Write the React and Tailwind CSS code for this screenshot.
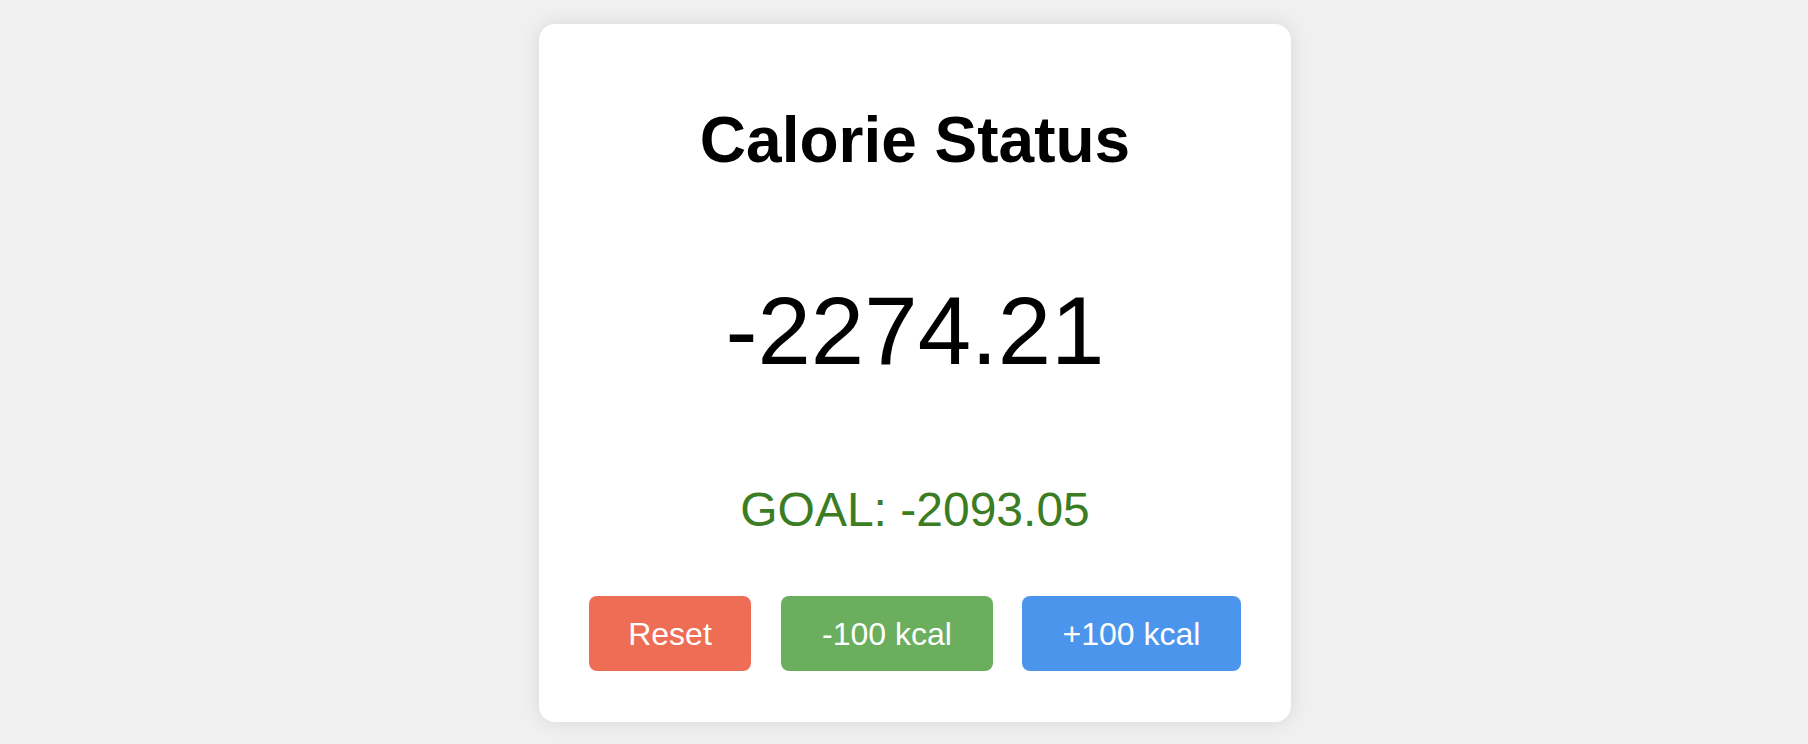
import React from "react";

export default function App() {
  return (
    <div
      className="min-h-[744px] w-full bg-[#f0f0f0] flex justify-center pl-[22px] pt-[24px]"
      style={{ fontFamily: '"Liberation Sans", Arial, sans-serif' }}
    >
      <div className="w-[752px] h-[698px] bg-white rounded-[16px] shadow-[0_0_20px_rgba(0,0,0,0.1)] flex flex-col items-center pt-[80px]">
        <h1 className="text-[64px] font-bold text-black leading-[73px] m-0">Calorie Status</h1>
        <div className="mt-[99px] text-[96px] text-black leading-[110px]">-2274.21</div>
        <div className="mt-[96px] text-[48px] text-[#3b7d23] leading-[55px]">GOAL: -2093.05</div>
        <div className="mt-[59px] flex gap-[30px]">
          <button className="w-[162px] h-[75px] rounded-[8px] bg-[#ee6e55] text-white text-[32px]">Reset</button>
          <button className="w-[212px] h-[75px] rounded-[8px] bg-[#6aae5e] text-white text-[32px]">-100 kcal</button>
          <button className="w-[219px] h-[75px] rounded-[8px] bg-[#4b96ec] text-white text-[32px] -ml-[1px]">+100 kcal</button>
        </div>
      </div>
    </div>
  );
}
